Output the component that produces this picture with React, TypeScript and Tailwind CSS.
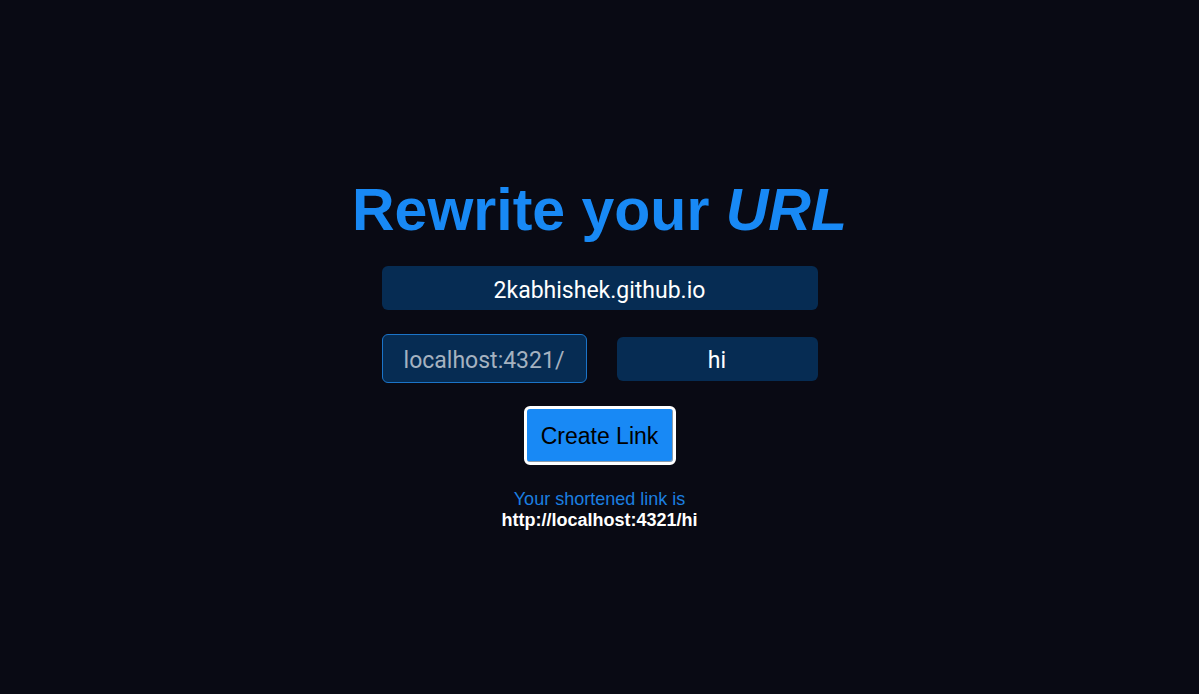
export default function App() {
  return (
    <main className="flex min-h-screen flex-col items-center justify-center bg-[#090a14] pt-3 font-['Liberation_Sans',sans-serif]">
      <h1 className="text-[59px] leading-[70px] font-bold text-[#1889f5]">
        Rewrite your <em>URL</em>
      </h1>
      <form className="mt-[21px] flex flex-col items-center" onSubmit={(e) => e.preventDefault()}>
        <input
          aria-label="Long URL"
          defaultValue="2kabhishek.github.io"
          className="h-11 w-[436px] max-w-full rounded-md bg-[#062c53] pt-1 text-center font-[Roboto,sans-serif] text-[23px] text-white outline-none"
        />
        <div className="mt-6 flex w-[436px] max-w-full items-center gap-[30px]">
          <input
            aria-label="Domain"
            readOnly
            placeholder="localhost:4321/"
            className="h-[49px] w-[205px] rounded-md border border-[#1b74c8] bg-[#062c53] pt-1 text-center font-[Roboto,sans-serif] text-[23px] outline-none placeholder:text-[#a5b2c0]"
          />
          <input
            aria-label="Short path"
            defaultValue="hi"
            className="h-11 min-w-0 flex-1 rounded-md bg-[#062c53] pt-1 text-center font-[Roboto,sans-serif] text-[23px] text-white outline-none"
          />
        </div>
        <button
          type="submit"
          className="mt-[23px] h-[59px] w-[152px] rounded-md border-3 border-white bg-[#1889f5] pt-0.5 text-[23px] text-black shadow-[inset_-1px_-1px_0_#8a9cad]"
        >
          Create Link
        </button>
      </form>
      <p className="mt-6 text-center text-[18px] leading-[21px] text-[#1b7fe0]">
        Your shortened link is
        <br />
        <a href="http://localhost:4321/hi" className="font-bold text-white">
          http://localhost:4321/hi
        </a>
      </p>
    </main>
  );
}
